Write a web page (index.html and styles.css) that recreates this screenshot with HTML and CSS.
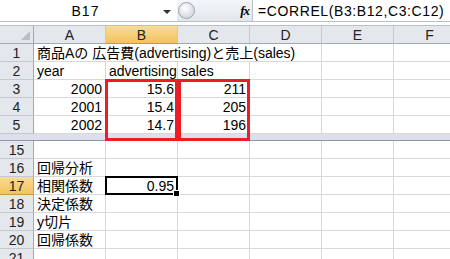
FILE: index.html
```html
<!DOCTYPE html>
<html lang="ja">
<head>
    <meta charset="UTF-8">
    <title>CORREL</title>
    <link rel="stylesheet" href="styles.css">
</head>
<body>
    <div class="formula-bar">
        <div class="name-box">
            <span class="name">B17</span>
            <span class="drop"></span>
        </div>
        <div class="fx-area">
            <span class="grip"></span>
            <span class="fx">fx</span>
        </div>
        <div class="formula">=CORREL(B3:B12,C3:C12)</div>
    </div>

    <div class="sheet">
        <div class="row head">
            <div class="rh corner"><span class="tri"></span></div>
            <div class="ch">A</div>
            <div class="ch active">B</div>
            <div class="ch">C</div>
            <div class="ch">D</div>
            <div class="ch">E</div>
            <div class="ch">F</div>
        </div>
        <div class="row">
            <div class="rh">1</div>
            <div class="c"><span class="spill">商品Aの 広告費(advertising)と売上(sales)</span></div>
            <div class="c"></div><div class="c"></div><div class="c"></div><div class="c"></div><div class="c"></div>
        </div>
        <div class="row">
            <div class="rh">2</div>
            <div class="c">year</div>
            <div class="c">advertising</div>
            <div class="c">sales</div>
            <div class="c"></div><div class="c"></div><div class="c"></div>
        </div>
        <div class="row">
            <div class="rh">3</div>
            <div class="c num">2000</div>
            <div class="c num">15.6</div>
            <div class="c num">211</div>
            <div class="c"></div><div class="c"></div><div class="c"></div>
        </div>
        <div class="row">
            <div class="rh">4</div>
            <div class="c num">2001</div>
            <div class="c num">15.4</div>
            <div class="c num">205</div>
            <div class="c"></div><div class="c"></div><div class="c"></div>
        </div>
        <div class="row">
            <div class="rh">5</div>
            <div class="c num">2002</div>
            <div class="c num">14.7</div>
            <div class="c num">196</div>
            <div class="c"></div><div class="c"></div><div class="c"></div>
        </div>
        <div class="split"></div>
        <div class="row">
            <div class="rh">15</div>
            <div class="c"></div><div class="c"></div><div class="c"></div><div class="c"></div><div class="c"></div><div class="c"></div>
        </div>
        <div class="row">
            <div class="rh">16</div>
            <div class="c">回帰分析</div>
            <div class="c"></div><div class="c"></div><div class="c"></div><div class="c"></div><div class="c"></div>
        </div>
        <div class="row">
            <div class="rh active">17</div>
            <div class="c">相関係数</div>
            <div class="c num">0.95</div>
            <div class="c"></div><div class="c"></div><div class="c"></div><div class="c"></div>
        </div>
        <div class="row">
            <div class="rh">18</div>
            <div class="c">決定係数</div>
            <div class="c"></div><div class="c"></div><div class="c"></div><div class="c"></div><div class="c"></div>
        </div>
        <div class="row">
            <div class="rh">19</div>
            <div class="c">y切片</div>
            <div class="c"></div><div class="c"></div><div class="c"></div><div class="c"></div><div class="c"></div>
        </div>
        <div class="row">
            <div class="rh">20</div>
            <div class="c">回帰係数</div>
            <div class="c"></div><div class="c"></div><div class="c"></div><div class="c"></div><div class="c"></div>
        </div>
        <div class="row">
            <div class="rh">21</div>
            <div class="c"></div><div class="c"></div><div class="c"></div><div class="c"></div><div class="c"></div><div class="c"></div>
        </div>

        <div class="mark mark-b"></div>
        <div class="mark mark-c"></div>
        <div class="selected"><span class="handle"></span></div>
    </div>
</body>
</html>
```

FILE: styles.css
```css
:root {
    --grid: #d9d9d9;
    --head-bg: #e4e8ed;
    --head-line: #c3c9d1;
    --active-top: #f9dc96;
    --active-bottom: #f2c25e;
    --mark: #ee1c25;
}

body {
    margin: 0;
    width: 450px;
    height: 259px;
    overflow: hidden;
    background: #ffffff;
    font-family: 'Liberation Sans', 'Noto Sans CJK JP', sans-serif;
    font-size: 14px;
    color: #000000;
}

/* formula bar */
.formula-bar {
    display: flex;
    height: 21px;
    border-bottom: 1px solid #b9c0c9;
    background: #ffffff;
}

.name-box {
    width: 177px;
    display: flex;
    align-items: center;
    position: relative;
}

.name {
    flex: 1;
    text-align: center;
    padding-left: 8px;
    letter-spacing: 1px;
}

.drop {
    width: 0;
    height: 0;
    border-left: 4px solid transparent;
    border-right: 4px solid transparent;
    border-top: 4px solid #333333;
    margin: 2px 6px 0 0;
}

.fx-area {
    width: 75px;
    display: flex;
    align-items: center;
    justify-content: space-between;
    background: linear-gradient(#f4f6f9, #e2e6eb);
    border-right: 1px solid #b9c0c9;
}

.grip {
    width: 15px;
    height: 15px;
    margin-left: 1px;
    border-radius: 50%;
    border: 1px solid #9aa3ad;
    background: radial-gradient(circle at 40% 35%, #ffffff, #d5dae0 70%);
}

.fx {
    font-family: 'Liberation Serif', serif;
    font-style: italic;
    font-weight: bold;
    font-size: 13px;
    margin-right: 3px;
    letter-spacing: -1px;
}

.formula {
    flex: 1;
    padding-left: 5px;
    display: flex;
    align-items: center;
    letter-spacing: 0.6px;
}

/* sheet */
.sheet {
    position: relative;
    margin-top: 3px;
    border-top: 1px solid #b9c0c9;
}

.row {
    display: flex;
    height: 18px;
}

.rh {
    width: 34px;
    box-sizing: border-box;
    flex: none;
    background: var(--head-bg);
    border-right: 1px solid #9fa8b3;
    border-bottom: 1px solid var(--head-line);
    text-align: center;
    line-height: 18px;
    color: #222222;
}

.rh.active {
    background: linear-gradient(var(--active-top), var(--active-bottom));
    border-bottom-color: #c59b48;
}

.corner {
    position: relative;
    border-bottom-color: #9fa8b3;
}

.tri {
    position: absolute;
    right: 3px;
    bottom: 3px;
    width: 0;
    height: 0;
    border-left: 9px solid transparent;
    border-bottom: 9px solid #b8bec6;
}

.ch {
    width: 72px;
    box-sizing: border-box;
    flex: none;
    background: var(--head-bg);
    border-right: 1px solid var(--head-line);
    border-bottom: 1px solid #9fa8b3;
    text-align: center;
    line-height: 18px;
    color: #222222;
}

.ch.active {
    background: linear-gradient(var(--active-top), var(--active-bottom));
    border-bottom-color: #c59b48;
}

.c {
    width: 72px;
    box-sizing: border-box;
    flex: none;
    border-right: 1px solid var(--grid);
    border-bottom: 1px solid var(--grid);
    padding: 0 3px;
    line-height: 18px;
    white-space: nowrap;
    position: relative;
}

.c.num {
    text-align: right;
    padding-right: 3px;
}

.spill {
    position: relative;
    z-index: 1;
    background: #ffffff;
    padding-right: 1px;
}

.row .c:first-of-type + .c {
}

.split {
    height: 7px;
    display: flex;
    background: #dde0ec;
    border-bottom: 1px solid #8e97aa;
    box-sizing: border-box;
}

/* overlays */
.mark {
    position: absolute;
    top: 53px;
    height: 62px;
    border: 3px solid var(--mark);
    box-sizing: border-box;
    z-index: 2;
}

.mark-b {
    left: 105px;
    width: 73px;
}

.mark-c {
    left: 178px;
    width: 72px;
}

.selected {
    position: absolute;
    left: 105px;
    top: 150px;
    width: 73px;
    height: 19px;
    border: 2px solid #000000;
    box-sizing: border-box;
    z-index: 2;
}

.handle {
    position: absolute;
    right: -4px;
    bottom: -4px;
    width: 5px;
    height: 5px;
    background: #000000;
    border: 1px solid #ffffff;
}
```
